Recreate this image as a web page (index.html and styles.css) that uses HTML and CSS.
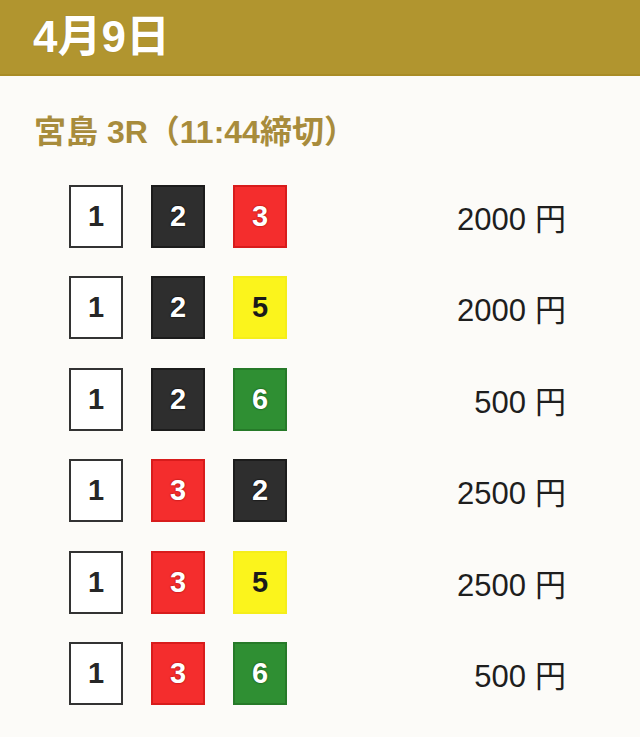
FILE: index.html
```html
<!DOCTYPE html>
<html lang="ja">
<head>
<meta charset="utf-8">
<link rel="stylesheet" href="styles.css">
</head>
<body>
<header class="date-bar"><h1 class="date">4月9日</h1></header>
<main class="race">
  <h2 class="race-title">宮島 3R（11:44締切）</h2>
  <ul class="bets">
    <li class="bet"><span class="boat b1">1</span><span class="boat b2">2</span><span class="boat b3">3</span><span class="amount">2000<span class="yen">円</span></span></li>
    <li class="bet"><span class="boat b1">1</span><span class="boat b2">2</span><span class="boat b5">5</span><span class="amount">2000<span class="yen">円</span></span></li>
    <li class="bet"><span class="boat b1">1</span><span class="boat b2">2</span><span class="boat b6">6</span><span class="amount">500<span class="yen">円</span></span></li>
    <li class="bet"><span class="boat b1">1</span><span class="boat b3">3</span><span class="boat b2">2</span><span class="amount">2500<span class="yen">円</span></span></li>
    <li class="bet"><span class="boat b1">1</span><span class="boat b3">3</span><span class="boat b5">5</span><span class="amount">2500<span class="yen">円</span></span></li>
    <li class="bet"><span class="boat b1">1</span><span class="boat b3">3</span><span class="boat b6">6</span><span class="amount">500<span class="yen">円</span></span></li>
  </ul>
</main>
</body>
</html>
```
FILE: styles.css
```css
html, body {
  margin: 0;
  padding: 0;
}
body {
  background: #fcfbf8;
  font-family: "Liberation Sans", "Noto Sans CJK JP", sans-serif;
  width: 640px;
  height: 737px;
  overflow: hidden;
}
.date-bar {
  height: 76px;
  background: #b1952f;
  border-bottom: 2px solid #a98c26;
  box-sizing: border-box;
  display: flex;
  align-items: center;
  padding-left: 33px;
}
.date {
  margin: 0;
  color: #ffffff;
  font-size: 44px;
  font-weight: 700;
  font-family: "Liberation Sans", "Noto Sans CJK JP", sans-serif;
  line-height: 1;
  text-shadow: 0 0 1px rgba(120, 95, 20, 0.6);
}
.race {
  padding-top: 37px;
}
.race-title {
  margin: 0 0 34px 34px;
  color: #a88c3c;
  font-size: 32px;
  font-weight: 700;
  line-height: 38px;
}
.bets {
  list-style: none;
  margin: 0;
  padding: 0 74px 0 69px;
  display: flex;
  flex-direction: column;
  gap: 29.5px;
}
.bet {
  display: flex;
  align-items: center;
  gap: 28px;
  height: 62px;
}
.boat {
  width: 54px;
  height: 63px;
  box-sizing: border-box;
  display: flex;
  align-items: center;
  justify-content: center;
  font-size: 29px;
  font-weight: 700;
  border: 2px solid #222;
}
.b1 { background: #ffffff; color: #262626; border-color: #333; }
.b2 { background: #2e2e2e; color: #fff; border-color: #1c1c1c; text-shadow: 0 0 2px #000, 0 0 1px #000; }
.b3 { background: #f42d2d; color: #fff; border-color: #d81c1c; text-shadow: 0 0 2px #8a0000; }
.b5 { background: #fbf41c; color: #1a1a1a; border-color: #f5ee1a; }
.b6 { background: #2f8f33; color: #fff; border-color: #267a29; text-shadow: 0 0 2px #0b3a0b; }
.amount {
  margin-left: auto;
  font-size: 31px;
  color: #1e1e1e;
  white-space: nowrap;
}
.yen {
  margin-left: 9px;
  font-size: 31px;
}
```
